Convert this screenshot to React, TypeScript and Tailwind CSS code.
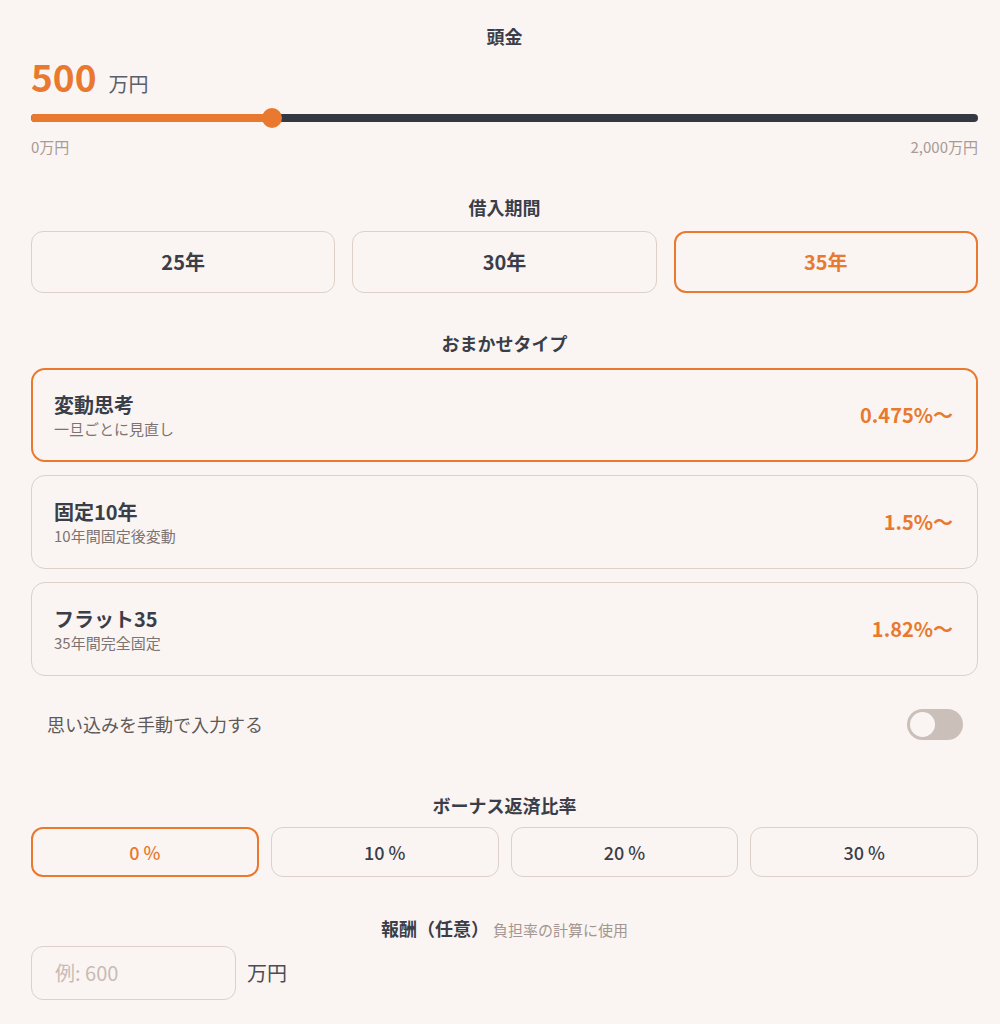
import React from "react";

const ORANGE = "text-[#e9792f]";

export default function App() {
  const terms = ["25年", "30年", "35年"];
  const plans = [
    { t: "変動思考", s: "一旦ごとに見直し", r: "0.475%〜", sel: true },
    { t: "固定10年", s: "10年間固定後変動", r: "1.5%〜", sel: false },
    { t: "フラット35", s: "35年間完全固定", r: "1.82%〜", sel: false },
  ];
  const bonus = ["0 %", "10 %", "20 %", "30 %"];
  const pct = 25.5;
  return (
    <div
      className="min-h-[1024px] w-[1000px] bg-[#faf5f2] pl-[31px] pr-[22px] pt-[24px] text-[#3a3e49]"
      style={{ fontFamily: '"Noto Sans CJK JP", "Noto Sans", sans-serif' }}
    >
      <div className="h-6 text-center text-[18px] font-bold leading-6">頭金</div>
      <div className="mt-[8px] flex h-10 items-baseline gap-3">
        <span className={`text-[37px] font-bold leading-10 ${ORANGE}`}>500</span>
        <span className="text-[20px] leading-6 text-[#5b5f69]">万円</span>
      </div>
      <div className="relative mt-[18px] h-2 rounded-full bg-[#343843]">
        <div className="absolute left-0 top-0 h-2 rounded-full bg-[#e9792f]" style={{ width: `${pct}%` }} />
        <div
          className="absolute top-1/2 h-5 w-5 -translate-x-1/2 -translate-y-1/2 rounded-full bg-[#e9792f]"
          style={{ left: `${pct}%` }}
        />
      </div>
      <div className="mt-[15px] flex justify-between text-[15px] leading-[20px] text-[#a99a94]">
        <span>0万円</span>
        <span>2,000万円</span>
      </div>

      <div className="mt-[38px] h-6 text-center text-[18px] font-bold leading-6">借入期間</div>
      <div className="mt-3 grid grid-cols-3 gap-[17px]">
        {terms.map((t, i) => (
          <div
            key={t}
            className={`flex h-[62px] items-center justify-center rounded-xl text-[20px] font-bold ${
              i === 2 ? "border-2 border-[#e9792f] text-[#e9792f]" : "border border-[#dcd0c9] text-[#3a3e49]"
            }`}
          >
            {t}
          </div>
        ))}
      </div>

      <div className="mt-[38px] h-6 text-center text-[18px] font-bold leading-6">おまかせタイプ</div>
      <div className="mt-[13px] flex flex-col gap-[13px]">
        {plans.map((p) => (
          <div
            key={p.t}
            className={`flex h-[94px] items-center justify-between rounded-[14px] ${
              p.sel ? "border-2 border-[#e9792f] pl-[21px] pr-[23px]" : "border border-[#dcd0c9] pl-[22px] pr-[24px]"
            }`}
          >
            <div className="flex flex-col">
              <span className="text-[20px] font-bold leading-[28px]">{p.t}</span>
              <span className="text-[15px] leading-5 text-[#7d7370]">{p.s}</span>
            </div>
            <span className={`text-[20px] font-bold ${ORANGE}`}>{p.r}</span>
          </div>
        ))}
      </div>

      <div className="mt-[33px] flex items-center justify-between pl-4 pr-[15px]">
        <span className="text-[18px] text-[#5e5a5a]">思い込みを手動で入力する</span>
        <div className="flex h-[31px] w-[56px] items-center rounded-full bg-[#cbbfba] px-[3px]">
          <div className="h-[25px] w-[25px] rounded-full bg-[#faf5f2]" />
        </div>
      </div>

      <div className="mt-[53px] h-6 text-center text-[18px] font-bold leading-6">ボーナス返済比率</div>
      <div className="mt-[10px] grid grid-cols-4 gap-3">
        {bonus.map((b, i) => (
          <div
            key={b}
            className={`flex h-[50px] items-center justify-center rounded-xl text-[18px] font-medium ${
              i === 0 ? "border-2 border-[#e9792f] text-[#e9792f]" : "border border-[#dcd0c9] text-[#3a3e49]"
            }`}
          >
            {b}
          </div>
        ))}
      </div>

      <div className="mt-[39px] flex h-6 items-baseline justify-center gap-1 leading-6">
        <span className="text-[18px] font-bold">報酬（任意）</span>
        <span className="text-[15px] text-[#a39591]">負担率の計算に使用</span>
      </div>
      <div className="mt-[6px] flex items-center gap-[11px]">
        <div className="flex h-[54px] w-[205px] items-center rounded-xl border border-[#dcd0c9] px-[23px] text-[20px] text-[#c8bbb5]">
          例: 600
        </div>
        <span className="text-[20px] text-[#4a4d57]">万円</span>
      </div>
    </div>
  );
}
